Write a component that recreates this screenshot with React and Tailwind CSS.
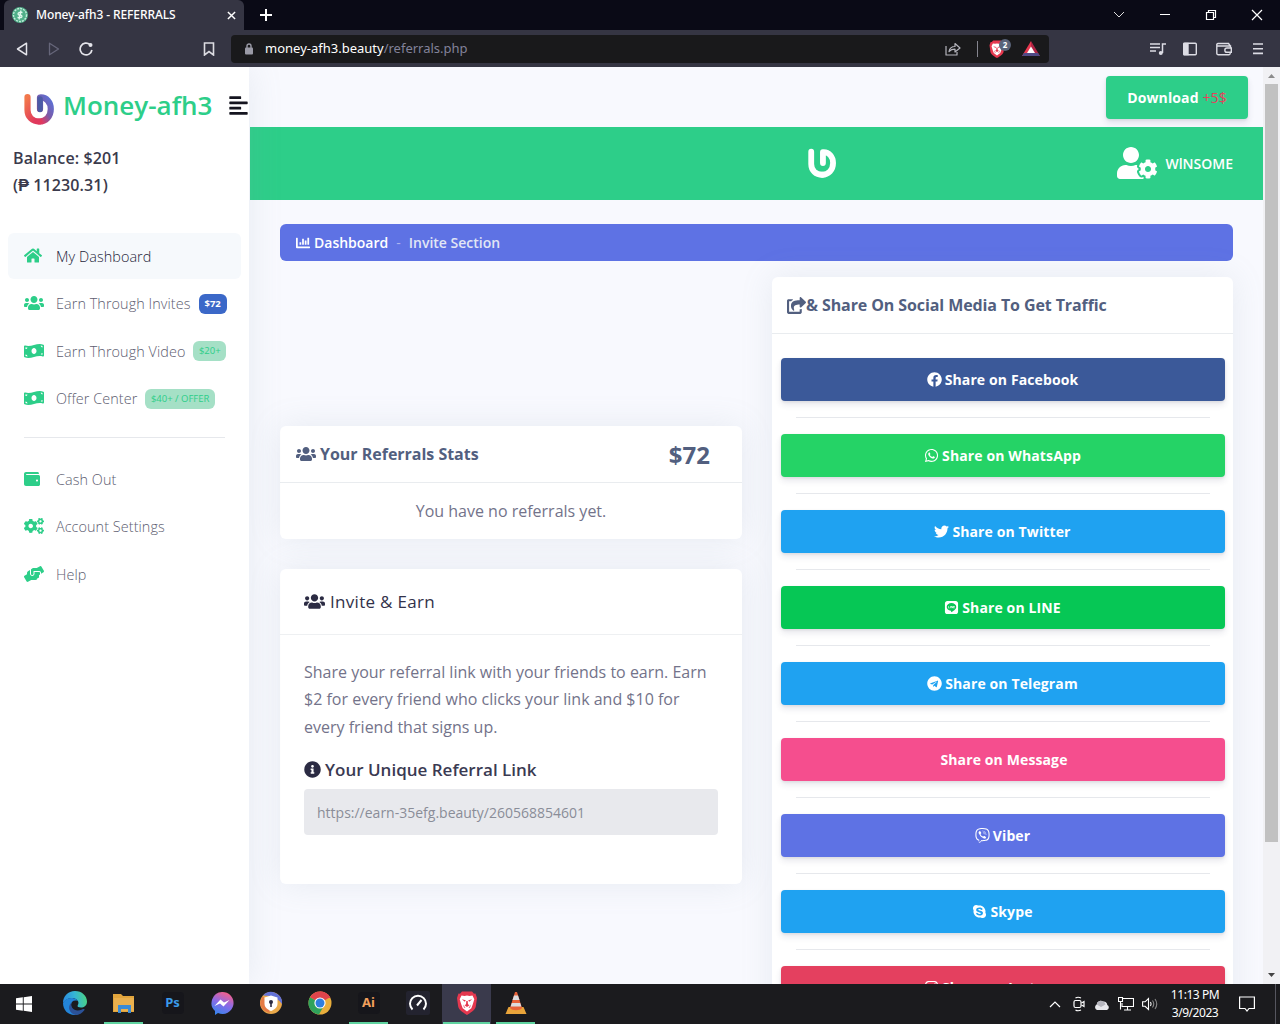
import React from "react";
import {
  FaAlignLeft,
  FaChartBar,
  FaCogs,
  FaFacebook,
  FaHandsHelping,
  FaHome,
  FaInfoCircle,
  FaInstagram,
  FaLine,
  FaMoneyBillWave,
  FaShareSquare,
  FaSkype,
  FaTelegram,
  FaTwitter,
  FaUserCog,
  FaUsers,
  FaViber,
  FaWallet,
  FaWhatsapp,
} from "react-icons/fa";

const navItems = [
  { label: "My Dashboard", icon: FaHome, iconSize: "h-[17px] w-[18px]", active: true },
  { label: "Earn Through Invites", icon: FaUsers, iconSize: "h-4 w-5", badge: "$72", solid: true },
  { label: "Earn Through Video", icon: FaMoneyBillWave, iconSize: "h-4 w-5", badge: "$20+" },
  { label: "Offer Center", icon: FaMoneyBillWave, iconSize: "h-4 w-5", badge: "$40+ / OFFER" },
];

const accountItems = [
  { label: "Cash Out", icon: FaWallet, iconSize: "size-4" },
  { label: "Account Settings", icon: FaCogs, iconSize: "h-4 w-5" },
  { label: "Help", icon: FaHandsHelping, iconSize: "h-4 w-5" },
];

const shareButtons = [
  { label: "Share on Facebook", icon: FaFacebook, color: "bg-[#3b5999]" },
  { label: "Share on WhatsApp", icon: FaWhatsapp, color: "bg-[#25d366]" },
  { label: "Share on Twitter", icon: FaTwitter, color: "bg-[#1fa2f1]" },
  { label: "Share on LINE", icon: FaLine, color: "bg-[#06c755]" },
  { label: "Share on Telegram", icon: FaTelegram, color: "bg-[#1fa2f1]" },
  { label: "Share on Message", color: "bg-[#f54e8e]" },
  { label: "Viber", icon: FaViber, color: "bg-[#5e72e4]" },
  { label: "Skype", icon: FaSkype, color: "bg-[#1fa2f1]" },
  { label: "Share on Instagram", icon: FaInstagram, color: "bg-[#e4405f]" },
];

function BrandMark({ className, colored }) {
  return (
    <svg viewBox="0 0 30 32" className={className} fill="none">
      <defs>
        <linearGradient id="brandLeft" x1="0" y1="0" x2="0.6" y2="1">
          <stop offset="0" stopColor="#f2784b" />
          <stop offset="1" stopColor="#e0385c" />
        </linearGradient>
        <linearGradient id="brandRight" x1="1" y1="0" x2="0.3" y2="1">
          <stop offset="0" stopColor="#5b72d8" />
          <stop offset="0.6" stopColor="#7a5aa8" />
          <stop offset="1" stopColor="#d83c68" />
        </linearGradient>
      </defs>
      <path
        d="M16 16V4.500C22.500 4 26.800 9.500 26.800 16c0 7.500-5 12.500-11.500 12.500"
        stroke={colored ? "url(#brandRight)" : "#fff"}
        strokeWidth="6.200"
        strokeLinecap="round"
        strokeLinejoin="round"
      />
      <path
        d="M3.500 4v13c0 7 5 11.500 11.800 11.500"
        stroke={colored ? "url(#brandLeft)" : "#fff"}
        strokeWidth="6.200"
        strokeLinecap="round"
      />
      {colored && (
        <path d="M16 16.500V6" stroke="#4b5ba6" strokeWidth="5.500" strokeLinecap="round" />
      )}
    </svg>
  );
}

function BraveLion({ className }) {
  return (
    <svg viewBox="0 0 20 24" className={className}>
      <path
        d="M5 .5h10l2 2.200 1.500-.2L20 7l-1.200 8.500c-.6 2.800-3 4.800-8.800 8.500-5.800-3.700-8.200-5.700-8.800-8.500L0 7l1.500-4.500 1.500.2z"
        fill="#e5384f"
      />
      <path
        d="M4.500 4.500l3 .6L10 4.500l2.500.6 3-.6 1.800 3.800-1.500 5-1.500 4L10 20.500l-4.300-3.200-1.500-4-1.500-5z"
        fill="#fff"
      />
      <path
        d="M4.800 8.300l4 .9-1 1.500zM15.200 8.300l-4 .9 1 1.500zM9.300 10h1.400l.3 3.200 1.500 1-2.500 1.700-2.500-1.700 1.500-1zM6 13.500l2.500 3.500-1.500-.5zM14 13.500L11.500 17l1.500-.5z"
        fill="#e5384f"
      />
    </svg>
  );
}

function BrowserChrome() {
  return (
    <header className="shrink-0 font-['Noto_Sans',sans-serif]">
      <div className="flex h-[30px] items-stretch bg-[#0a0a16] pl-1 text-white">
        <div className="flex w-[240px] items-center rounded-t-md bg-[#353543] pl-2 pr-2">
          <svg viewBox="0 0 16 16" className="size-4 shrink-0">
            <circle cx="8" cy="8" r="8" fill="#4fae88" />
            <circle cx="8" cy="8" r="6.500" fill="none" stroke="#c4ecdb" strokeWidth="1.400" strokeDasharray="2 1" />
            <path
              d="M10.500 5.500H7a1.300 1.300 0 0 0 0 2.500h2a1.300 1.300 0 0 1 0 2.500H5.500M9 3.500l-2 9"
              fill="none"
              stroke="#e4f8ef"
              strokeWidth="1.300"
            />
          </svg>
          <span className="ml-2 flex-1 whitespace-nowrap text-[12px] font-medium tracking-[-0.100px]">
            Money-afh3 - REFERRALS
          </span>
          <svg viewBox="0 0 10 10" className="size-[9px]" stroke="#fff" strokeWidth="1.600">
            <path d="M1 1l8 8M9 1L1 9" />
          </svg>
        </div>
        <svg viewBox="0 0 12 12" className="ml-4 size-3 self-center" stroke="#fff" strokeWidth="2">
          <path d="M6 0v12M0 6h12" />
        </svg>
        <div className="ml-auto flex items-center pr-[17px]">
          <svg viewBox="0 0 12 12" className="mr-[34px] size-3" fill="none" stroke="#ddd">
            <path d="M1 3l5 5 5-5" />
          </svg>
          <svg viewBox="0 0 12 12" className="mr-[34px] size-3" stroke="#fff">
            <path d="M1 5.500h10" />
          </svg>
          <svg viewBox="0 0 12 12" className="mr-[34px] size-3" fill="none" stroke="#fff" strokeWidth="1.200">
            <path d="M1.500 3.500h7v7h-7zM3.500 3.500v-2h7v7h-2" />
          </svg>
          <svg viewBox="0 0 12 12" className="size-3" stroke="#fff" strokeWidth="1.200">
            <path d="M1 1l10 10M11 1L1 11" />
          </svg>
        </div>
      </div>

      <div className="flex h-[37px] items-center bg-[#353543] pl-4">
        <svg viewBox="0 0 12 14" className="h-[14px] w-3" fill="none" stroke="#e4e4ea" strokeWidth="1.500" strokeLinejoin="round">
          <path d="M10.500 1.200v11.600L1.500 7z" />
        </svg>
        <svg viewBox="0 0 12 14" className="ml-5 h-[14px] w-3" fill="none" stroke="#66667a" strokeWidth="1.300" strokeLinejoin="round">
          <path d="M1.500 1.200v11.600l9-5.800z" />
        </svg>
        <svg viewBox="0 0 14 14" className="ml-[19px] size-[14px]" fill="none" stroke="#e4e4ea" strokeWidth="1.700">
          <path d="M11 2.600A5.900 5.900 0 1 0 12.900 8" />
          <circle cx="11.500" cy="3" r="2" fill="#e4e4ea" stroke="none" />
        </svg>
        <svg viewBox="0 0 12 14" className="ml-[110px] h-[14px] w-3" fill="none" stroke="#dcdce2" strokeWidth="1.600">
          <path d="M1.500 1h9v12L6 9.500 1.500 13z" />
        </svg>
        <div className="ml-4 flex h-7 w-[818px] items-center rounded bg-[#19191b] pl-[14px] pr-[9px]">
          <svg viewBox="0 0 8 12" className="h-3 w-2" fill="#9a9aa6">
            <rect y="4.500" width="8" height="7" rx="1" />
            <path d="M2 5V3a2 2 0 0 1 4 0v2" fill="none" stroke="#9a9aa6" strokeWidth="1.400" />
          </svg>
          <span className="ml-3 flex-1 text-[13px] text-white">
            money-afh3.beauty<span className="text-[#82829a]">/referrals.php</span>
          </span>
          <svg viewBox="0 0 16 14" className="h-[14px] w-4" fill="none" stroke="#b4b4bc" strokeWidth="1.200" strokeLinejoin="round">
            <path d="M1 4v9h11v-3" />
            <path d="M4 9.500C4.500 6.500 6.500 4.500 10 4.500V1.500l5 4.500-5 4V7.200C7.500 7.200 5.500 8 4 9.500z" />
          </svg>
          <div className="ml-4 h-4 w-px bg-[#85858f]" />
          <div className="relative ml-[11px]">
            <BraveLion className="h-[18px] w-4" />
            <span className="absolute -top-px left-[10px] flex size-3 items-center justify-center rounded-full bg-[#596379] text-[8px] font-bold text-white">
              2
            </span>
          </div>
          <svg viewBox="0 0 18 16" className="ml-[17px] h-4 w-[18px]">
            <path d="M9 0L0 15h9z" fill="#e5384f" />
            <path d="M9 0l9 15H9z" fill="#b02545" />
            <path d="M0 15h18l-2-3H2z" fill="#4f4a86" />
            <path d="M9 5.500L5 12h8z" fill="#fff" />
          </svg>
        </div>
        <div className="ml-auto flex items-center pr-[17px] text-[#dcdce4]">
          <svg viewBox="0 0 16 14" className="mr-[17px] h-[14px] w-4" fill="none" stroke="currentColor" strokeWidth="1.500">
            <path d="M0 2h10M0 5.500h10M0 9h6M12.500 11V2H16" />
            <circle cx="10.800" cy="11" r="2" fill="currentColor" stroke="none" />
          </svg>
          <svg viewBox="0 0 14 14" className="mr-[19px] size-[14px]" fill="none" stroke="currentColor" strokeWidth="1.400">
            <rect x="0.700" y="1.200" width="12.600" height="11.600" rx="1" />
            <path d="M1 1.500h4v11H1z" fill="currentColor" />
          </svg>
          <svg viewBox="0 0 16 14" className="mr-[21px] h-[14px] w-4" fill="none" stroke="currentColor" strokeWidth="1.400">
            <path d="M14 4.500V3.500L12.500 1.500H2A1.300 1.300 0 0 0 .8 3v8A1.500 1.500 0 0 0 2.300 12.700H13a1.300 1.300 0 0 0 1.200-1.200v-1M1 4h13.500v2M15.300 6H11a2 2 0 0 0 0 4.300h4.300z" />
          </svg>
          <svg viewBox="0 0 10 12" className="h-3 w-[10px]" stroke="currentColor" strokeWidth="1.600">
            <path d="M0 1h10M0 5.700h10M0 10.400h10" />
          </svg>
        </div>
      </div>
    </header>
  );
}

function NavItem({ item }) {
  const Icon = item.icon;
  return (
    <a
      className={`mx-2 mb-[1.500px] flex h-[46px] items-center rounded-md pl-4 text-[14.400px] ${
        item.active ? "bg-[#f6f9fc] text-[#25253a]" : "text-[#5d5d70]"
      }`}
    >
      <span className="flex w-8 shrink-0 items-center text-[#2dce89]">
        <Icon className={`mb-px ${item.iconSize}`} preserveAspectRatio="xMinYMid meet" />
      </span>
      <span className="whitespace-nowrap pt-px font-light tracking-[0.070px]">{item.label}</span>
      {item.badge && (
        <span
          className={`ml-2 flex h-5 items-center whitespace-nowrap rounded-md px-[5.500px] text-[9.500px] ${
            item.solid
              ? "bg-[#3b68c8] px-[6px] font-bold text-white"
              : "bg-[#a5e0c6] font-medium text-[#2dce89]"
          }`}
        >
          {item.badge}
        </span>
      )}
    </a>
  );
}

function Sidebar() {
  return (
    <aside className="z-10 w-[249px] shrink-0 bg-white shadow-[0_0_32px_0_rgba(136,152,170,0.15)]">
      <div className="flex h-[78px] items-center pl-6">
        <BrandMark colored className="mt-[6px] h-8 w-[30px]" />
        <span className="mb-[2px] ml-[9px] whitespace-nowrap text-[26px] font-semibold text-[#2dce89]">
          Money-afh3
        </span>
        <FaAlignLeft className="mb-px ml-auto size-[21px] text-[#15151f]" />
      </div>
      <div className="h-[88px] pl-[13px] text-[16px] font-semibold leading-[27px] tracking-[0.120px] text-[#3a3a4c]">
        <p>Balance: $201</p>
        <p>(₱ 11230.31)</p>
      </div>
      <nav className="pt-[0.200px]">
        {navItems.map((item) => (
          <NavItem key={item.label} item={item} />
        ))}
      </nav>
      <hr className="mx-6 mb-[17.600px] mt-[15.800px] border-[#e6e8ec]" />
      <nav>
        {accountItems.map((item) => (
          <NavItem key={item.label} item={item} />
        ))}
      </nav>
    </aside>
  );
}

function Card({ className = "", children }) {
  return (
    <section
      className={`rounded-md bg-white shadow-[0_0_32px_0_rgba(136,152,170,0.15)] ${className}`}
    >
      {children}
    </section>
  );
}

function ReferralColumn() {
  return (
    <div className="w-[462px] shrink-0 pt-[149px]">
      <Card className="h-[113px]">
        <div className="flex h-[57px] items-center border-b border-[#e9ecef] pl-4 pr-8 font-semibold text-[#525f7f]">
          <FaUsers className="size-5" />
          <h3 className="ml-1 text-[16px] font-bold tracking-[-0.020px]">Your Referrals Stats</h3>
          <span className="ml-auto pt-px text-[24px] font-bold">$72</span>
        </div>
        <p className="flex h-[56px] items-center justify-center text-[16px] text-[#73738a]">
          You have no referrals yet.
        </p>
      </Card>

      <Card className="mt-[30px] h-[315px]">
        <h3 className="flex h-[66px] items-center border-b border-[#eef0f2] pl-6 text-[17px] font-medium tracking-[0.300px] text-[#32324a]">
          <FaUsers className="mr-[5px] size-[21px] text-[#2b2b43]" />
          Invite &amp; Earn
        </h3>
        <div className="px-6 pt-6">
          <p className="whitespace-nowrap text-[16px] leading-[27.300px] text-[#73738a]">
            Share your referral link with your friends to earn. Earn
            <br />
            $2 for every friend who clicks your link and $10 for
            <br />
            every friend that signs up.
          </p>
          <h4 className="mt-[15.600px] flex h-[26px] items-center text-[17px] font-semibold text-[#3a3a52]">
            <FaInfoCircle className="mr-1 size-[17px] text-[#2b2b43]" />
            Your Unique Referral Link
          </h4>
          <div className="mt-[7px] flex h-[46px] items-center rounded bg-[#e8e9ed] px-[13px] pt-px text-[14px] text-[#8a8d98]">
            https://earn-35efg.beauty/260568854601
          </div>
        </div>
      </Card>
    </div>
  );
}

function ShareColumn() {
  return (
    <Card className="ml-[30px] flex-1">
      <h3 className="flex h-[57px] items-center whitespace-nowrap border-b border-[#e9ecef] pl-[15px] text-[16px] font-bold tracking-[-0.100px] text-[#525f7f]">
        <FaShareSquare className="size-[19px]" />
        &amp; Share On Social Media To Get Traffic
      </h3>
      <div className="pl-[9px] pr-2 pt-6">
        {shareButtons.map(({ label, icon: Icon, color }) => (
          <React.Fragment key={label}>
            <button
              className={`flex h-[43px] w-full items-center justify-center rounded pr-px text-[14px] font-bold tracking-[0.120px] text-white shadow-[0_4px_6px_rgba(50,50,93,0.11),0_1px_3px_rgba(0,0,0,0.08)] ${color}`}
            >
              {Icon ? <Icon className="mr-[3px] size-[15px]" /> : <span className="w-[3px]" />}
              {label}
            </button>
            <hr className="mx-[15px] my-4 border-[#e6e8ec]" />
          </React.Fragment>
        ))}
      </div>
    </Card>
  );
}

function Scrollbar() {
  return (
    <div className="flex w-[17px] shrink-0 flex-col items-center bg-[#f1f1f4]">
      <svg viewBox="0 0 17 17" className="size-[17px]">
        <path d="M5 11l3.500-4 3.500 4z" fill="#8b8b8b" />
      </svg>
      <div className="h-[758px] w-[13px] bg-[#c1c1c1]" />
      <svg viewBox="0 0 17 17" className="mt-auto size-[17px]">
        <path d="M5 6l3.500 4L12 6z" fill="#444" />
      </svg>
    </div>
  );
}

const taskbarApps = [
  {
    name: "edge",
    art: (
      <>
        <defs>
          <linearGradient id="edgeTop" x1="0" y1="0.5" x2="1" y2="0.4">
            <stop offset="0" stopColor="#2a8be0" />
            <stop offset="0.5" stopColor="#35b5d6" />
            <stop offset="1" stopColor="#4bd384" />
          </linearGradient>
        </defs>
        <path d="M0 12C0 5 5 0 12 0s12 5 12 10.500c0 4-3 6-6 6-2.500 0-4-1-3.300-2.300C17 11 14 7 9 7c-4 0-7 2-9 5z" fill="url(#edgeTop)" />
        <path d="M0 12c2-4 6-5.500 9.500-5C12 7.300 14 8.500 15 10c-4-1.500-7 .5-7 4 0 5 5 8 10 7-2 2-4 3-6.500 3C5 24 0 19 0 12z" fill="#2384d8" />
        <path d="M8.500 11.500C7 17 12 21.500 19 18.500c1.500-.7 3-.5 2.500.5-2 3-5.500 5-9 5C7 23 3.500 16 8.500 11.500z" fill="#2b5197" />
      </>
    ),
  },
  {
    name: "explorer",
    running: true,
    art: (
      <>
        <path d="M1 3h8l2 2h11v16H1z" fill="#e2a53c" />
        <path d="M2 7h20v13H2z" fill="#eab04e" />
        <path d="M6 14h13v8h-3v-4H9v4H6z" fill="#3a8bd6" />
      </>
    ),
  },
  { name: "photoshop", text: "Ps", textColor: "text-[#3b9bea]" },
  {
    name: "messenger",
    art: (
      <>
        <defs>
          <linearGradient id="msgr" x1="0.700" y1="0" x2="0.300" y2="1">
            <stop offset="0" stopColor="#fb5f86" />
            <stop offset="0.500" stopColor="#8a6be8" />
            <stop offset="1" stopColor="#3585ee" />
          </linearGradient>
        </defs>
        <path d="M12 1a11 11 0 1 1-4 21l-3 2v-4A11 11 0 0 1 12 1z" fill="url(#msgr)" />
        <path d="M4.500 15l6-6.500 3.500 3L19.500 9l-6 6.500-3.500-3z" fill="#fff" />
      </>
    ),
  },
  {
    name: "vpn",
    art: (
      <>
        <circle cx="12" cy="12" r="11" fill="#eaa94a" />
        <path d="M4 4.500A11 11 0 0 1 23 13c-3-4-6-6-11-8z" fill="#6272d8" />
        <path d="M1 12c1 6 5 9 10 10l-2-6L5 6H3z" fill="#e57b45" />
        <path d="M12 4.500l6.500 2v6c0 4-3 6-6.500 7.500-3.500-1.500-6.500-3.500-6.500-7.500v-6z" fill="#fff" />
        <circle cx="12" cy="11" r="2" fill="#2b2b43" />
        <path d="M11.200 11h1.600v5h-1.600z" fill="#2b2b43" />
      </>
    ),
  },
  {
    name: "chrome",
    art: (
      <>
        <circle cx="12" cy="12" r="11.500" fill="#e9ae3c" />
        <path d="M12 12L2 6.200A11.500 11.500 0 0 1 22 6.200z" fill="#e0444c" />
        <path d="M12 .5A11.500 11.500 0 0 1 22.500 7H12z" fill="#e0444c" />
        <path d="M2 6.200A11.500 11.500 0 0 0 11 23.500l5-9z" fill="#2fa35c" />
        <circle cx="12" cy="12" r="5.600" fill="#fff" />
        <circle cx="12" cy="12" r="4.500" fill="#2f7fe0" />
      </>
    ),
  },
  { name: "illustrator", running: true, text: "Ai", textColor: "text-[#f2a05c]" },
  {
    name: "speedtest",
    art: (
      <>
        <rect width="24" height="24" rx="2" fill="#23232f" />
        <path d="M6.500 18.500a8 8 0 1 1 11 0" fill="none" stroke="#fff" strokeWidth="2" />
        <path d="M11 14.500l4.500-5.500" stroke="#fff" strokeWidth="2" />
      </>
    ),
  },
  { name: "brave", running: true, active: true },
  {
    name: "vlc",
    running: true,
    art: (
      <>
        <path d="M4.500 16h15l3 7h-21z" fill="#e9a43a" />
        <path d="M11 1h2l5 16c-2 3-10 3-12 0z" fill="#e8623a" />
        <path d="M10 4.500h4l1.500 4.500h-7zM7.800 12h8.400l1.200 3.500H6.600z" fill="#dcdcdf" />
      </>
    ),
  },
];

function TaskbarApp({ app }) {
  return (
    <div className={`flex w-[49px] justify-center ${app.active ? "bg-[#3a3a4c]" : ""}`}>
      <div
        className={`flex items-center justify-center border-b-2 ${
          app.active ? "w-[47px]" : "w-[39px]"
        } ${app.running ? "border-[#5fd3a0]" : "border-transparent"}`}
      >
        {app.text && (
          <span
            className={`flex size-[22px] items-center justify-center rounded-sm bg-[#16161b] text-[13px] font-bold ${app.textColor}`}
          >
            {app.text}
          </span>
        )}
        {app.art && (
          <svg viewBox="0 0 24 24" className="size-6">
            {app.art}
          </svg>
        )}
        {app.active && <BraveLion className="h-6 w-5" />}
      </div>
    </div>
  );
}

function Taskbar() {
  return (
    <footer className="flex h-10 shrink-0 bg-[#1b1b1e] font-['Noto_Sans',sans-serif] text-white">
      <div className="flex w-[50px] items-center pl-4">
        <svg viewBox="0 0 16 16" className="size-4" fill="#fff">
          <path d="M0 2.200L6.800 1.300v6.200H0zM7.700 1.200L16 0v7.500H7.700zM0 8.400h6.800v6.300L0 13.800zM7.700 8.400H16V16l-8.300-1.200z" />
        </svg>
      </div>
      {taskbarApps.map((app) => (
        <TaskbarApp key={app.name} app={app} />
      ))}
      <div className="ml-auto flex items-center">
        <svg viewBox="0 0 12 8" className="mr-3 h-2 w-3" fill="none" stroke="#fff" strokeWidth="1.200">
          <path d="M1 7l5-5 5 5" />
        </svg>
        <svg viewBox="0 0 12 16" className="mr-[9px] h-4 w-3" fill="none" stroke="#fff" strokeWidth="1.200">
          <rect x="1" y="4.500" width="7" height="7" rx="1.500" />
          <path d="M8.500 7l2.500-1.500v5L8.500 9M2.500 2Q5 .5 8 2M2.500 14q2.500 1.500 5.500 0" />
        </svg>
        <svg viewBox="0 0 16 11" className="mr-2 h-[11px] w-4">
          <path d="M3 11a3 3 0 0 1-.3-5.500A4 4 0 0 1 9 2.500 4 4 0 0 1 13.300 6 2.700 2.700 0 0 1 13 11z" fill="#e8e8ec" />
          <path d="M2.700 5.500A4 4 0 0 1 9 2.500c2 .5 2 2 2.500 3L7 8z" fill="#b6b6be" />
        </svg>
        <svg viewBox="0 0 16 14" className="mr-2 h-[14px] w-4" fill="none" stroke="#fff" strokeWidth="1.100">
          <path d="M5 1.500h10.500v8H4V6M9.500 9.500V13M6 13h7M.5.500h4v4h-4zM2.500 4.500v8" />
        </svg>
        <svg viewBox="0 0 16 14" className="mr-3 h-[14px] w-4" fill="none" stroke="#fff" strokeWidth="1.100">
          <path d="M.6 4.800h2.500L6.500 1.500v11L3.100 9.300H.6zM8.500 5q1.200 2 0 4" />
          <path d="M10.500 3.500q2.500 3.500 0 7M13 2q3.500 5 0 10" stroke="#888" />
        </svg>
        <div className="w-[50px] text-center text-[12px] leading-[18px] tracking-[-0.450px]">
          <p className="whitespace-nowrap">11:13 PM</p>
          <p className="whitespace-nowrap">3/9/2023</p>
        </div>
        <svg viewBox="0 0 16 16" className="ml-[19px] h-4 w-4" fill="none" stroke="#fff" strokeWidth="1.200">
          <path d="M.6 1h14.800v11.500H10L8 15l-2-2.500H.6z" />
        </svg>
        <div className="ml-5 mr-1 h-10 w-px bg-[#56565f]" />
      </div>
    </footer>
  );
}

export default function App() {
  return (
    <div className="flex h-[1024px] w-[1280px] flex-col overflow-hidden font-['Open_Sans',sans-serif]">
      <BrowserChrome />
      <div className="flex h-[917px] overflow-hidden bg-[#f8f9fe]">
        <Sidebar />
        <main className="flex min-w-0 flex-1 flex-col pl-px">
          <div className="flex h-[60px] shrink-0 items-center justify-end pr-[15px]">
            <button className="h-[43px] w-[142px] rounded bg-[#2dce89] text-[14px] font-bold tracking-[0.130px] text-white shadow-[0_4px_6px_rgba(50,50,93,0.11),0_1px_3px_rgba(0,0,0,0.08)]">
              Download <span className="font-medium text-[#e8405c]">+5$</span>
            </button>
          </div>
          <div className="flex h-[73px] shrink-0 items-center bg-[#2dce89] pr-[30px]">
            <BrandMark className="mb-[2px] ml-[557px] h-[30px] w-[30px]" />
            <div className="ml-auto flex items-center text-white">
              <FaUserCog className="mb-px h-8 w-10" />
              <span className="ml-2 text-[14px] font-semibold">WlNSOME</span>
            </div>
          </div>
          <div className="px-[30px] pt-6">
            <div className="flex h-[37px] items-center rounded-md bg-[#5e72e4] pl-4 text-[14px] font-semibold text-white">
              <FaChartBar className="mr-1 size-[14px]" />
              <span>Dashboard</span>
              <span className="mx-2 font-normal text-[#adb5f0]">-</span>
              <span className="text-[#e1e6f5]">Invite Section</span>
            </div>
            <div className="mt-4 flex">
              <ReferralColumn />
              <ShareColumn />
            </div>
          </div>
        </main>
        <Scrollbar />
      </div>
      <Taskbar />
    </div>
  );
}
